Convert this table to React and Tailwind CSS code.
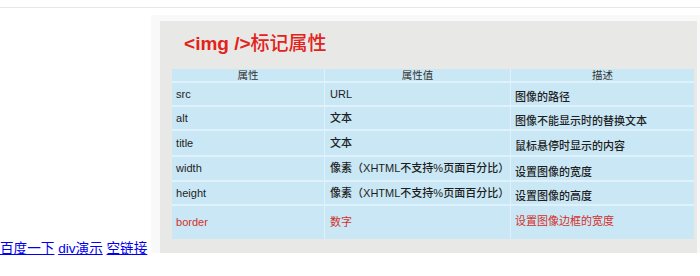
import React from "react";

const rows = [
  { h: "h-[24px]", a: "src", b: "URL", c: "图像的路径", cPad: "pt-[7px]" },
  { h: "h-[24px]", a: "alt", b: "文本", c: "图像不能显示时的替换文本", cPad: "pt-[7px]" },
  { h: "h-[26px]", a: "title", b: "文本", c: "鼠标悬停时显示的内容", cPad: "pt-[6px]" },
  { h: "h-[25px]", a: "width", b: "像素（XHTML不支持%页面百分比）", c: "设置图像的宽度", cPad: "pt-[7px]" },
  { h: "h-[24px]", a: "height", b: "像素（XHTML不支持%页面百分比）", c: "设置图像的高度", cPad: "pt-[7px]" },
];

export default function App() {
  return (
    <div
      className="w-[700px] h-[276px] overflow-hidden bg-white [text-spacing-trim:space-all]"
      style={{ fontFamily: '"Liberation Sans", "Noto Sans CJK SC", sans-serif' }}
    >
      <div className="h-[8px] border-b border-[#e6e6e6]" />
      <div className="mt-[7px] text-[13.6px] whitespace-nowrap">
        <a href="#" className="text-[#0000ee] underline">百度一下</a>{" "}
        <a href="#" className="text-[#0000ee] underline">div演示</a>{" "}
        <a href="#" className="text-[#0000ee] underline">空链接</a>{" "}
        <div className="inline-block overflow-hidden align-baseline w-[550px] h-[238px] bg-[#f8f9f8] pl-[9px] pt-[6px] pr-[4px]">
          <div className="w-[537px] h-[232px] bg-[#e8e9e7] pl-[12px] pr-[3px]">
            <div className="h-[48px] pl-[12px] pt-[11px] leading-none text-[19px] text-[#e3221a] whitespace-nowrap">
              <span className="font-bold">&lt;img /&gt;</span>
              <span className="font-medium" style={{ fontFamily: '"Noto Sans CJK SC", sans-serif' }}>标记属性</span>
            </div>
            <div className="w-[522px] bg-[#c9e7f4] text-[11px] leading-none text-[#1e1e1e] font-medium">
              <div className="flex h-[12px] text-[10.5px] text-[#333] font-normal">
                <div className="w-[152px] flex items-center justify-center">属性</div>
                <div className="w-[186px] flex items-center justify-center border-l border-[#dff1fa]">属性值</div>
                <div className="flex-1 flex items-center justify-center border-l border-[#dff1fa]">描述</div>
              </div>
              {rows.map((r) => (
                <div key={r.a} className={`flex ${r.h} border-t-2 border-[#dff1fa]`}>
                  <div className="w-[152px] flex items-center pl-[4px]">{r.a}</div>
                  <div className="w-[186px] flex items-center pl-[5px] border-l border-[#dff1fa]">{r.b}</div>
                  <div className={`flex-1 flex items-center pl-[4px] border-l border-[#dff1fa] ${r.cPad}`}>{r.c}</div>
                </div>
              ))}
              <div className="flex h-[35px] border-t-2 border-[#dff1fa] text-[#d4302a] font-normal">
                <div className="w-[152px] flex items-center pl-[4px]">border</div>
                <div className="w-[186px] flex items-center pl-[5px] border-l border-[#dff1fa]">数字</div>
                <div className="flex-1 flex items-center pl-[4px] border-l border-[#dff1fa] pb-[2px]">设置图像边框的宽度</div>
              </div>
            </div>
          </div>
        </div>
      </div>
    </div>
  );
}
